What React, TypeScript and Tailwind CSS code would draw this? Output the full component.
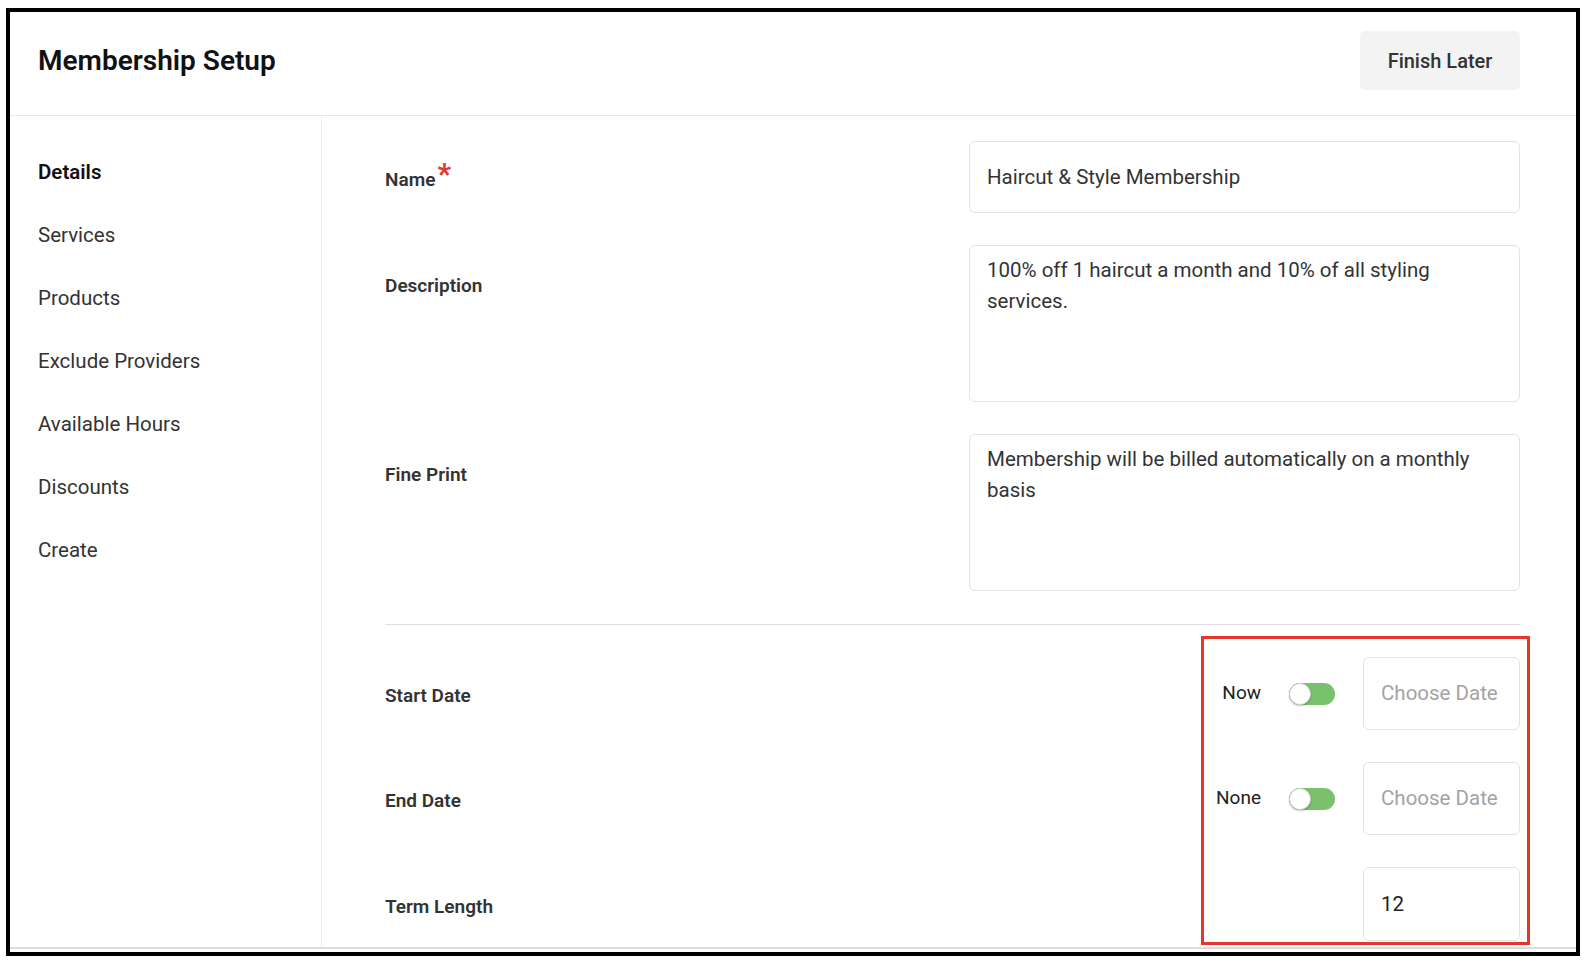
import { ReactNode } from "react";

const steps = [
  "Details",
  "Services",
  "Products",
  "Exclude Providers",
  "Available Hours",
  "Discounts",
  "Create",
];

function Toggle() {
  return (
    <div className="flex h-[22px] w-[46px] items-center rounded-full bg-[#79c16d]">
      <div className="h-[22px] w-[22px] rounded-full border border-[#d4d4d4] bg-white shadow-[0_1px_2px_rgba(0,0,0,0.25)]" />
    </div>
  );
}

function Row({ label, children, offset }: { label: ReactNode; children: ReactNode; offset: string }) {
  return (
    <div className="flex items-start justify-between">
      <div className={`flex items-center text-[19px] font-semibold leading-[24px] text-[#333] ${offset}`}>
        {label}
      </div>
      {children}
    </div>
  );
}

function DateControl({ label }: { label: string }) {
  return (
    <div className="flex items-center gap-[28px] pt-px">
      <span className="text-[19px] text-[#222]">{label}</span>
      <Toggle />
      <div className="flex h-[73px] w-[157px] items-center rounded-[6px] border border-[#e2e2e2] pl-[17px] text-[20.5px] text-[#a3a3a3]">
        Choose Date
      </div>
    </div>
  );
}

export default function App() {
  return (
    <div className="h-[964px] w-[1588px] bg-white pl-[6px] pt-[8px] font-['Roboto','Liberation_Sans',sans-serif]">
      <div className="flex h-[948px] w-[1574px] flex-col border-4 border-black">
        <header className="flex h-[104px] shrink-0 items-center justify-between border-b border-[#e8e8e8] pb-[6px] pl-[28px] pr-[56px]">
          <h1 className="text-[28px] font-semibold text-[#111]">Membership Setup</h1>
          <button className="h-[59px] w-[160px] rounded-[5px] bg-[#f3f3f3] text-[20px] font-medium text-[#333]">
            Finish Later
          </button>
        </header>

        <div className="flex min-h-0 flex-1 overflow-hidden">
          <nav className="flex w-[312px] shrink-0 flex-col border-r border-[#ececec] pl-[28px] pt-[25px]">
            {steps.map((s, i) => (
              <div
                key={s}
                className={`flex h-[63px] items-center text-[20.5px] ${i === 0 ? "font-semibold text-[#111]" : "text-[#333]"}`}
              >
                {s}
              </div>
            ))}
          </nav>

          <main className="flex flex-1 flex-col pl-[63px] pr-[56px] pt-[25px]">
            <Row
              offset="mt-[27px]"
              label={
                <>
                  Name
                  <span className="-mt-[12px] ml-[2px] text-[30px] font-bold leading-[24px] text-[#e8352c]">*</span>
                </>
              }
            >
              <div className="flex h-[72px] w-[551px] items-center rounded-[6px] border border-[#e2e2e2] pl-[17px] text-[20.5px] text-[#333]">
                Haircut &amp; Style Membership
              </div>
            </Row>

            <div className="mt-[32px]">
              <Row label="Description" offset="mt-[29px]">
                <div className="h-[157px] w-[551px] rounded-[6px] border border-[#e2e2e2] px-[17px] pt-[9px] text-[20.5px] leading-[31px] text-[#333]">
                  100% off 1 haircut a month and 10% of all styling services.
                </div>
              </Row>
            </div>

            <div className="mt-[32px]">
              <Row label="Fine Print" offset="mt-[29px]">
                <div className="h-[157px] w-[551px] rounded-[6px] border border-[#e2e2e2] px-[17px] pt-[9px] text-[20.5px] leading-[31px] text-[#333]">
                  Membership will be billed automatically on a monthly basis
                </div>
              </Row>
            </div>

            <div className="mt-[33px] h-px shrink-0 bg-[#dedede]" />

            <div className="relative mt-[31px] flex flex-col">
              <Row label="Start Date" offset="mt-[28px]">
                <DateControl label="Now" />
              </Row>
              <div className="mt-[31px]">
                <Row label="End Date" offset="mt-[28px]">
                  <DateControl label="None" />
                </Row>
              </div>
              <div className="mt-[32px]">
                <Row label="Term Length" offset="mt-[28px]">
                  <div className="flex h-[74px] w-[157px] items-center rounded-[6px] border border-[#e2e2e2] pl-[17px] text-[20.5px] text-[#222]">
                    12
                  </div>
                </Row>
              </div>
              <div className="absolute -right-[10px] -top-[20px] h-[309px] w-[329px] border-[3px] border-[#e8352c]" />
            </div>
          </main>
        </div>

        <div className="h-[5px] shrink-0 border-t-2 border-[#dcdcdc]" />
      </div>
    </div>
  );
}
